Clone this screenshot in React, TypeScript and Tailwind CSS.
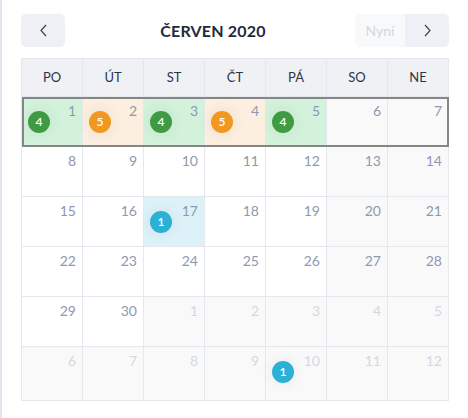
import React from 'react'

type Tone = 'green' | 'orange' | 'blue'

interface Day {
    n: number
    other?: boolean
    weekend?: boolean
    tone?: Tone
    count?: number
}

const dayNames = ['PO', 'ÚT', 'ST', 'ČT', 'PÁ', 'SO', 'NE']

const cellBg: Record<Tone, string> = {
    green: 'bg-[#d3f2dc]',
    orange: 'bg-[#fdefdf]',
    blue: 'bg-[#ddf1f8]',
}

const badgeBg: Record<Tone, string> = {
    green: 'bg-[#3e9b44]',
    orange: 'bg-[#f0981f]',
    blue: 'bg-[#2cb0d6]',
}

const events: Record<string, { tone: Tone; count: number }> = {
    '0-0': { tone: 'green', count: 4 },
    '0-1': { tone: 'orange', count: 5 },
    '0-2': { tone: 'green', count: 4 },
    '0-3': { tone: 'orange', count: 5 },
    '0-4': { tone: 'green', count: 4 },
    '2-2': { tone: 'blue', count: 1 },
}

const buildWeeks = (): Day[][] => {
    const weeks: Day[][] = []
    for (let w = 0; w < 6; w++) {
        const row: Day[] = []
        for (let d = 0; d < 7; d++) {
            const idx = w * 7 + d + 1
            const other = idx > 30
            const ev = events[`${w}-${d}`]
            row.push({
                n: other ? idx - 30 : idx,
                other,
                weekend: d >= 5,
                tone: ev?.tone,
                count: ev?.count,
            })
        }
        weeks.push(row)
    }
    return weeks
}

const Chevron = ({ dir }: { dir: 'left' | 'right' }) => (
    <svg width="9" height="13" viewBox="0 0 9 13" fill="none">
        <polyline
            points={dir === 'left' ? '7,1 2,6.5 7,12' : '2,1 7,6.5 2,12'}
            stroke="#3a4254"
            strokeWidth="1.2"
        />
    </svg>
)

const Badge = ({ tone, count }: { tone: Tone; count: number }) => (
    <span
        className={`absolute left-[6px] top-[14px] flex h-[22px] w-[22px] items-center justify-center rounded-full text-[12px] font-semibold text-white shadow-[0_0_12px_4px_rgba(0,0,0,0.04)] ${badgeBg[tone]}`}
    >
        {count}
    </span>
)

const App = () => {
    const weeks = buildWeeks()

    return (
        <div
            className="h-[418px] w-[468px] border-l-2 border-[#e2e6ee] bg-white pl-[19px] pt-[14px]"
            style={{ fontFamily: 'Lato, "Open Sans", sans-serif' }}
        >
            <div className="flex w-[428px] items-center">
                <button className="flex h-[33px] w-[44px] items-center justify-center rounded-[5px] bg-[#eef0f5]">
                    <Chevron dir="left" />
                </button>
                <div className="flex-1 pl-[6px] text-center text-[16px] font-bold tracking-[0.2px] text-[#1f2a3c]">
                    ČERVEN 2020
                </div>
                <div className="flex h-[33px] overflow-hidden rounded-[5px]">
                    <button className="w-[50px] bg-[#f8f9fb] text-[14px] text-[#d4d7de]">
                        Nyní
                    </button>
                    <button className="flex w-[44px] items-center justify-center bg-[#eef0f5]">
                        <Chevron dir="right" />
                    </button>
                </div>
            </div>

            <div className="mt-[11px] w-[428px] border-l border-t border-[#e4e7ee]">
                <div className="grid h-[38px] grid-cols-7 bg-[#eff1f5]">
                    {dayNames.map((name) => (
                        <div
                            key={name}
                            className="flex items-center justify-center border-r border-b border-[#e4e7ee] text-[13px] text-[#2c3547]"
                        >
                            {name}
                        </div>
                    ))}
                </div>

                {weeks.map((week, w) => (
                    <div
                        key={w}
                        className={`relative grid grid-cols-7 ${w === 5 ? 'h-[54px]' : 'h-[50px]'}`}
                    >
                        {week.map((day, d) => (
                            <div
                                key={d}
                                className={`relative border-r border-b border-[#e4e7ee] pt-[3px] pr-[6px] text-right text-[14px] ${
                                    day.tone
                                        ? cellBg[day.tone]
                                        : day.other || day.weekend
                                          ? 'bg-[#f9f9fa]'
                                          : 'bg-white'
                                } ${day.other ? 'text-[#d3d8e0]' : 'text-[#8e99b0]'}`}
                            >
                                {day.n}
                                {day.tone && day.count && (
                                    <Badge tone={day.tone} count={day.count} />
                                )}
                                {w === 5 && d === 4 && <Badge tone="blue" count={1} />}
                            </div>
                        ))}
                        {w === 0 && (
                            <div className="pointer-events-none absolute inset-0 z-10 border-2 border-[#868686]" />
                        )}
                    </div>
                ))}
            </div>
        </div>
    )
}

export default App
